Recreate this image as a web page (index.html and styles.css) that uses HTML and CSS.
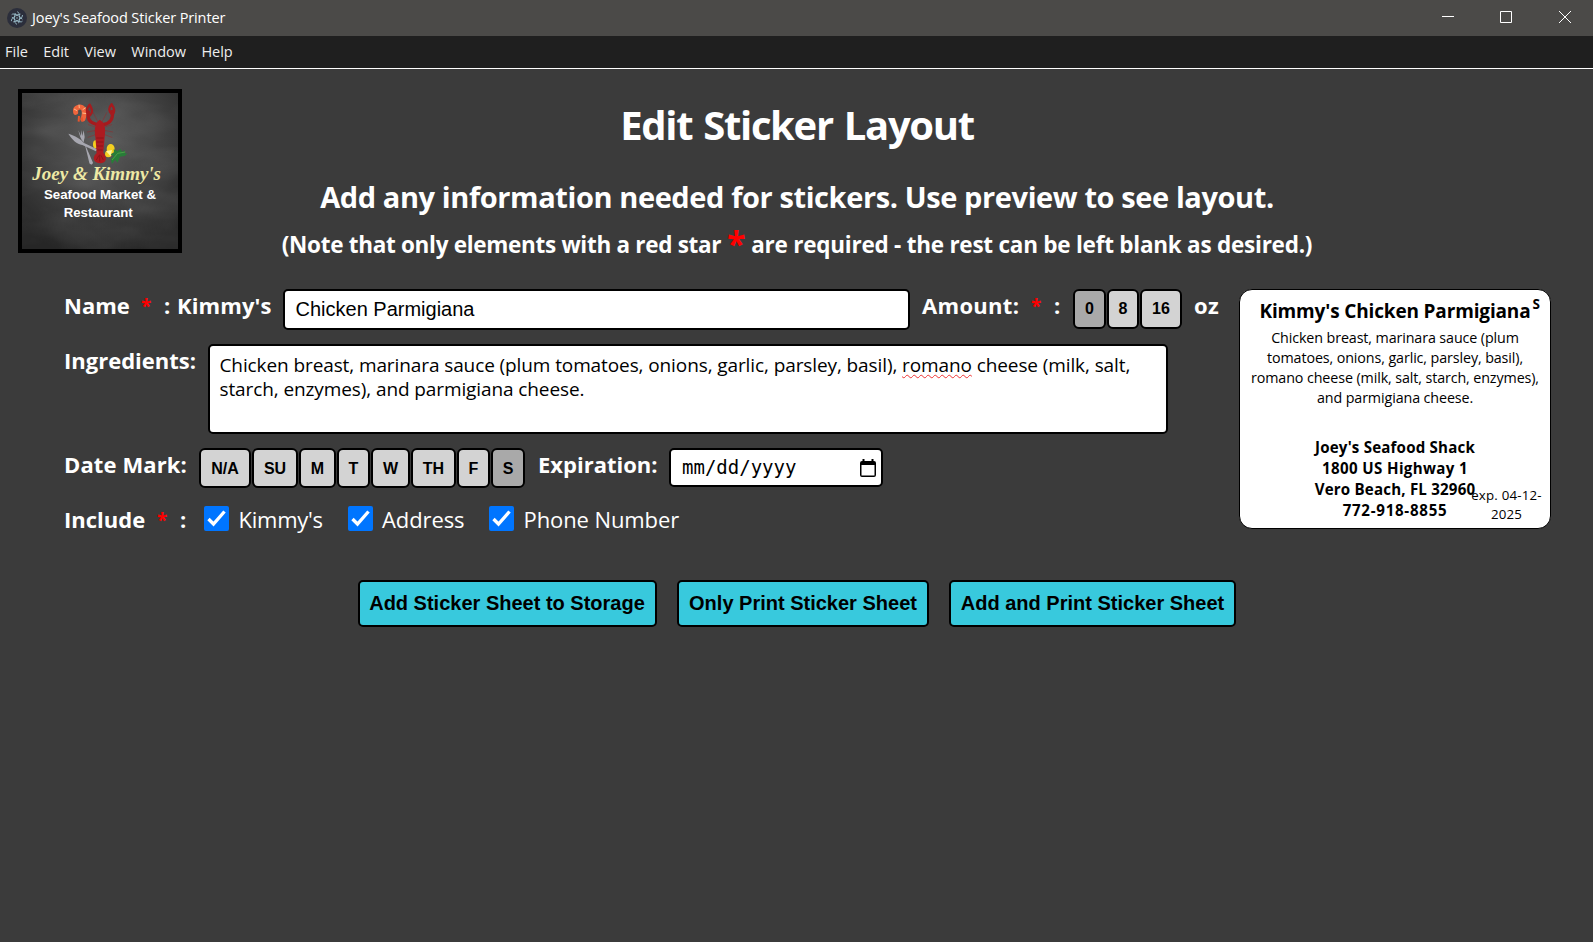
FILE: index.html
```
<!DOCTYPE html>
<html lang="en">
<head>
<meta charset="utf-8">
<title>Joey's Seafood Sticker Printer</title>
<link rel="stylesheet" href="styles.css">
</head>
<body>
<header class="titlebar">
  <svg class="app-icon" viewBox="0 0 20 20"><circle cx="10" cy="10" r="10" fill="#2b2e3b"/><g fill="none" stroke="#9fc3d0" stroke-width=".8" stroke-dasharray="12 2.500"><ellipse cx="10" cy="10" rx="6.300" ry="2.600" transform="rotate(30 10 10)"/><ellipse cx="10" cy="10" rx="6.300" ry="2.600" transform="rotate(90 10 10)"/><ellipse cx="10" cy="10" rx="6.300" ry="2.600" transform="rotate(150 10 10)"/></g><circle cx="10" cy="10" r=".7" fill="#9fc3d0"/></svg>
  <span class="app-title">Joey's Seafood Sticker Printer</span>
  <svg class="win-controls" viewBox="0 0 130 36"><path fill="none" stroke="#fff" d="M0 16.500h12M58.500 11.500h11v11h-11zM117 11l12 12M129 11l-12 12"/></svg>
</header>
<nav class="menubar"><span>File</span><span>Edit</span><span>View</span><span>Window</span><span>Help</span></nav>
<main class="page">
  <section class="intro">
    <svg class="logo" viewBox="36 39 468 468">
      <defs>
        <radialGradient id="board" cx=".5" cy=".3" r=".75"><stop offset="0" stop-color="#595959"/><stop offset=".55" stop-color="#404040"/><stop offset="1" stop-color="#262626"/></radialGradient>
        <filter id="dust" x="0" y="0" width="1" height="1"><feTurbulence type="fractalNoise" baseFrequency=".005 .012" numOctaves="3" seed="4"/><feColorMatrix values="0 0 0 0 1  0 0 0 0 1  0 0 0 0 1  .6 0 0 0 -.2"/></filter>
      </defs>
      <rect x="36" y="39" width="468" height="468" fill="url(#board)"/>
      <rect x="36" y="39" width="468" height="468" filter="url(#dust)" opacity=".25"/>
      <path d="M197 97C193 81 213 77 220 86C225 95 223 106 219 117" fill="none" stroke="#f0653c" stroke-width="15" stroke-linecap="round"/>
      <path d="M207 108l-1 17M215 112l2 13" stroke="#e8552d" stroke-width="6"/>
      <path d="M192 87l9 5M207 74l1 10M227 83l-9 6M230 101l-13-2" stroke="#ffbb8a" stroke-width="3"/>
      <g fill="#a7a7b0"><path d="M175 161C194 166 214 178 222 189L262 208L258 214L217 195C200 192 187 180 175 161z"/><path d="M205 151l8 17 1-18 3 18 4-17 3 20c-1 8-3 10-2 15l27 62c-2 7-8 7-11 1l-15-62c-7-4-12-10-18-36z"/></g>
      <g fill="#f4cf20"><ellipse cx="257" cy="193" rx="8" ry="12"/><ellipse cx="302" cy="207" rx="12" ry="15"/><ellipse cx="295" cy="222" rx="10" ry="10"/></g>
      <path d="M288 213l18-3-4 19z" fill="#fff6a0"/>
      <path d="M311 208l12 5 8-7 5 9 9-4-1 9 8 1-8 7-14 2-7 18-8-9-9 13-4-15 9-8-9-6 10-5z" fill="#287d38"/>
      <path d="M306 240l17-20 23-4" fill="none" stroke="#5cae4e" stroke-width="2"/>
      <g fill="none" stroke="#a51b1e" stroke-linecap="round"><path d="M262 134C240 128 231 119 235 96M279 134C300 130 310 119 307 94" stroke-width="10"/><path d="M236 105C228 96 230 84 239 74M240 106C250 97 246 88 240 76M305 103C296 93 295 82 305 73M308 103C317 92 311 81 305 73" stroke-width="7"/><path d="M258 142l-23-8M258 151l-26 5M259 163l-25 9M282 142l23-8M282 151l26 5M281 163l25 9M264 126l-16-31M276 126l14-28" stroke-width="1.500" opacity=".8"/></g>
      <path d="M269 119C284 127 288 144 284 171L280 218C289 229 291 240 282 247Q270 253 257 246C248 239 250 228 260 219L256 171C252 146 256 128 269 119z" fill="#ad1b20"/>
      <path d="M259 174h22M260 186h20M261 198h18M262 210h16M269 224v21M259 240l8-14M280 240l-7-14" stroke="#7d1015" stroke-width="2"/>
      <text x="67" y="300" textLength="386" lengthAdjust="spacingAndGlyphs" class="logo-name">Joey &amp; Kimmy's</text>
      <text x="102" y="356" textLength="336" lengthAdjust="spacingAndGlyphs" class="logo-sub">Seafood Market &amp;</text>
      <text x="161" y="411" textLength="207" lengthAdjust="spacingAndGlyphs" class="logo-sub">Restaurant</text>
    </svg>
    <div class="headings">
      <h1>Edit Sticker Layout</h1>
      <h2>Add any information needed for stickers. Use preview to see layout.</h2>
      <h3><span class="note-a">(Note that only elements with a red star</span><span class="bigstar">*</span><span class="note-b">are required - the rest can be left blank as desired.)</span></h3>
    </div>
  </section>
  <section class="editor">
    <form class="fields">
      <div class="row row-name">
        <label class="l-name">Name</label><span class="star s-name">*</span><span class="colon c-name">:</span><label class="l-kimmy">Kimmy's</label>
        <div class="box name-input">Chicken Parmigiana</div>
        <label class="l-amount">Amount:</label><span class="star s-amount">*</span><span class="colon c-amount">:</span>
        <div class="choices amounts"><b class="on">0</b><b>8</b><b>16</b></div>
        <label class="l-oz">oz</label>
      </div>
      <div class="row row-ing">
        <label class="l-ing">Ingredients:</label>
        <div class="box ingredients"><p>Chicken breast, marinara sauce (plum tomatoes, onions, garlic, parsley, basil), <span class="misspelt">romano</span> cheese (milk, salt,</p><p>starch, enzymes), and parmigiana cheese.</p></div>
      </div>
      <div class="row row-date">
        <label class="l-date">Date Mark:</label>
        <div class="choices days"><b>N/A</b><b>SU</b><b>M</b><b>T</b><b>W</b><b>TH</b><b>F</b><b class="on">S</b></div>
        <label class="l-exp">Expiration:</label>
        <div class="box date-input"><span>mm/dd/yyyy</span><svg class="cal" viewBox="0 0 16 18"><path fill="#000" fill-rule="evenodd" d="M2.500 0h2v2h7V0h2v2H14a2 2 0 0 1 2 2v12a2 2 0 0 1-2 2H2a2 2 0 0 1-2-2V4a2 2 0 0 1 2-2h.5zM1.500 6v10.500h13V6z"/></svg></div>
      </div>
      <div class="row row-inc">
        <label class="l-inc">Include</label><span class="star s-inc">*</span><span class="colon c-inc">:</span>
        <svg class="check" viewBox="0 0 25 25"><rect width="25" height="25" rx="2" fill="#0075ff"/><path d="M4.500 13l5 5L20.500 5.500" fill="none" stroke="#fff" stroke-width="3.300"/></svg><span class="opt o-kimmy">Kimmy's</span>
        <svg class="check" viewBox="0 0 25 25"><rect width="25" height="25" rx="2" fill="#0075ff"/><path d="M4.500 13l5 5L20.500 5.500" fill="none" stroke="#fff" stroke-width="3.300"/></svg><span class="opt o-addr">Address</span>
        <svg class="check" viewBox="0 0 25 25"><rect width="25" height="25" rx="2" fill="#0075ff"/><path d="M4.500 13l5 5L20.500 5.500" fill="none" stroke="#fff" stroke-width="3.300"/></svg><span class="opt o-phone">Phone Number</span>
      </div>
    </form>
    <aside class="sticker">
      <div class="st-title">Kimmy's Chicken Parmigiana</div>
      <div class="st-body"><p>Chicken breast, marinara sauce (plum</p><p>tomatoes, onions, garlic, parsley, basil),</p><p>romano cheese (milk, salt, starch, enzymes),</p><p>and parmigiana cheese.</p></div>
      <div class="st-addr"><p>Joey's Seafood Shack</p><p class="a2">1800 US Highway 1</p><p>Vero Beach, FL 32960</p><p class="a4">772-918-8855</p></div>
      <span class="st-mark">S</span>
      <div class="st-exp"><p>exp. 04-12-</p><p>2025</p></div>
    </aside>
  </section>
  <div class="actions">
    <button class="k1">Add Sticker Sheet to Storage</button><button class="k2">Only Print Sticker Sheet</button><button class="k3">Add and Print Sticker Sheet</button>
  </div>
</main>
</body>
</html>
```
FILE: styles.css
```
* { box-sizing: border-box; }
body { margin: 0; height: 942px; overflow: hidden; background: #3b3b3b; color: #fff; font-family: "Open Sans", "Noto Sans", sans-serif; }
h1, h2, h3, p { margin: 0; }
h1, h2, h3, span, label, p { white-space: nowrap; flex: none; }

.titlebar { height: 36px; background: #4b4a48; display: flex; align-items: center; padding-left: 7px; }
.app-icon { width: 20px; height: 20px; margin-right: 5px; }
.app-title { font-size: 14.500px; line-height: 36px; letter-spacing: -.11px; }
.win-controls { width: 130px; height: 36px; margin-left: auto; margin-right: 21px; }
.menubar { height: 32px; background: #1f1f1f; display: flex; padding-left: 5px; gap: 15.300px; font-size: 14.500px; line-height: 31px; color: #eee; }

.page { border-top: 1px solid #fff; }
.intro { display: flex; height: 220px; padding: 20px 0 0 18px; }
.logo { width: 164px; height: 164px; border: 4px solid #000; flex: none; }
.logo-name { font: italic bold 55px "Liberation Serif", serif; fill: #eee9a5; }
.logo-sub { font: bold 40px "Liberation Sans", sans-serif; fill: #fff; }
.headings { flex: 1; margin-right: 181px; text-align: center; }
h1 { font-size: 40px; line-height: 68px; margin-top: 2px; letter-spacing: -1.330px; word-spacing: 2px; }
h2 { font-size: 29px; line-height: 40px; margin-top: 18px; letter-spacing: -.4px; }
h3 { display: flex; justify-content: center; font-size: 22.500px; line-height: 34px; margin-top: 11px; }
.note-a { letter-spacing: -.3px; }
.note-b { letter-spacing: -.24px; }
.bigstar { color: red; font-size: 34px; width: 30px; line-height: 30px; }

.editor { display: flex; }
.fields { width: 1239px; padding-left: 64px; flex: none; }
.row { display: flex; align-items: flex-start; font-size: 22px; font-weight: bold; line-height: 32px; }
.row-name { height: 55px; }
.row-ing { height: 104px; }
.row-date { height: 55px; }
.row-inc { height: 26px; }
.row label { flex: none; }
.l-name { width: 66px; }
.l-kimmy { width: 94px; margin-left: 6px; letter-spacing: .1px; }
.l-amount { width: 98px; margin-left: 12px; letter-spacing: .3px; }
.l-oz { margin-left: 12px; letter-spacing: .5px; }
.l-ing { width: 132px; }
.l-date { width: 123px; letter-spacing: .12px; }
.l-exp { width: 119px; margin-left: 13px; }
.l-inc { width: 81px; }
.box { background: #fff; color: #000; border: 2px solid #000; border-radius: 5px; font-weight: normal; flex: none; }
.star { color: red; font-size: 19px; line-height: 34px; width: 11px; }
.colon { width: 7px; }
.s-name { margin-left: 11px; }
.c-name { margin-left: 12px; }
.name-input { width: 627px; height: 41px; margin-left: 12px; padding-left: 10.500px; font: 20px/37px "Liberation Sans", Arial, sans-serif; }
.s-amount { margin-left: 11px; }
.c-amount { margin-left: 12px; }
.choices { display: flex; gap: 1px; font: bold 16px/37px "Liberation Sans", Arial, sans-serif; color: #000; text-align: center; flex: none; }
.choices b { height: 40px; background: #d3d3d3; border: 2px solid #000; border-radius: 6px; flex: none; }
.choices .on { background: #a9a9a9; }
.amounts { margin-left: 12px; line-height: 36px; }
.amounts b { width: 33px; }
.amounts b:nth-child(2) { width: 32px; }
.amounts b:last-child { width: 42px; }
.ingredients { width: 960px; height: 90px; margin-left: 12px; padding: 7px 9.500px; font-size: 19px; line-height: 24px; letter-spacing: -.102px; }
.misspelt { text-decoration: underline wavy #e33 1px; text-underline-offset: 2px; }
.days { margin-left: 12px; }
.days b:nth-child(1) { width: 52px; }
.days b:nth-child(2) { width: 46px; }
.days b:nth-child(3) { width: 37px; }
.days b:nth-child(4) { width: 33px; }
.days b:nth-child(5) { width: 39px; }
.days b:nth-child(6) { width: 45px; }
.days b:nth-child(7) { width: 33px; }
.days b:nth-child(8) { width: 34px; }
.date-input { width: 214px; height: 39px; margin-left: 12px; padding: 0 5px 0 11px; display: flex; align-items: center; justify-content: space-between; font: 19px/35px "DejaVu Sans Mono", monospace; }
.cal { width: 16px; height: 18px; }
.s-inc { margin-left: 12px; }
.c-inc { margin-left: 12px; }
.check { width: 25px; height: 25px; margin: 3px 9.500px 0 17px; flex: none; }
.opt { font-weight: normal; letter-spacing: -.1px; }
.o-kimmy { width: 84px; letter-spacing: -.25px; }
.o-addr { width: 82px; }
.opt + .check { margin-left: 25px; }

.sticker { position: relative; width: 312px; height: 240px; background: #fff; color: #000; border: 1px solid #000; border-radius: 13px; text-align: center; flex: none; }
.st-title { font-size: 19px; font-weight: bold; line-height: 42px; letter-spacing: -.155px; }
.st-body { font-size: 14.300px; line-height: 20px; height: 102px; margin-top: -4px; letter-spacing: -.11px; }
.st-addr { font-size: 15.100px; font-weight: bold; line-height: 21px; margin-top: 7px; letter-spacing: .19px; }
.a2 { letter-spacing: .35px; }
.a4 { letter-spacing: .72px; }
.st-mark { position: absolute; right: 10px; top: 5px; font-size: 13.500px; line-height: 18px; font-weight: bold; }
.st-exp { position: absolute; left: 231px; top: 196px; width: 71px; font-size: 13.300px; line-height: 19px; letter-spacing: .2px; }

.actions { display: flex; justify-content: center; gap: 20px; margin-top: 51px; }
.actions button { height: 47px; padding: 0 0 2px; background: #38c9dd; border: 2px solid #000; border-radius: 5px; font: bold 20px/40px "Liberation Sans", Arial, sans-serif; color: #000; }
.k1 { width: 299px; }
.actions .k2 { width: 252px; padding-left: 1px; }
.actions .k3 { width: 287px; padding-left: 1px; }
```
